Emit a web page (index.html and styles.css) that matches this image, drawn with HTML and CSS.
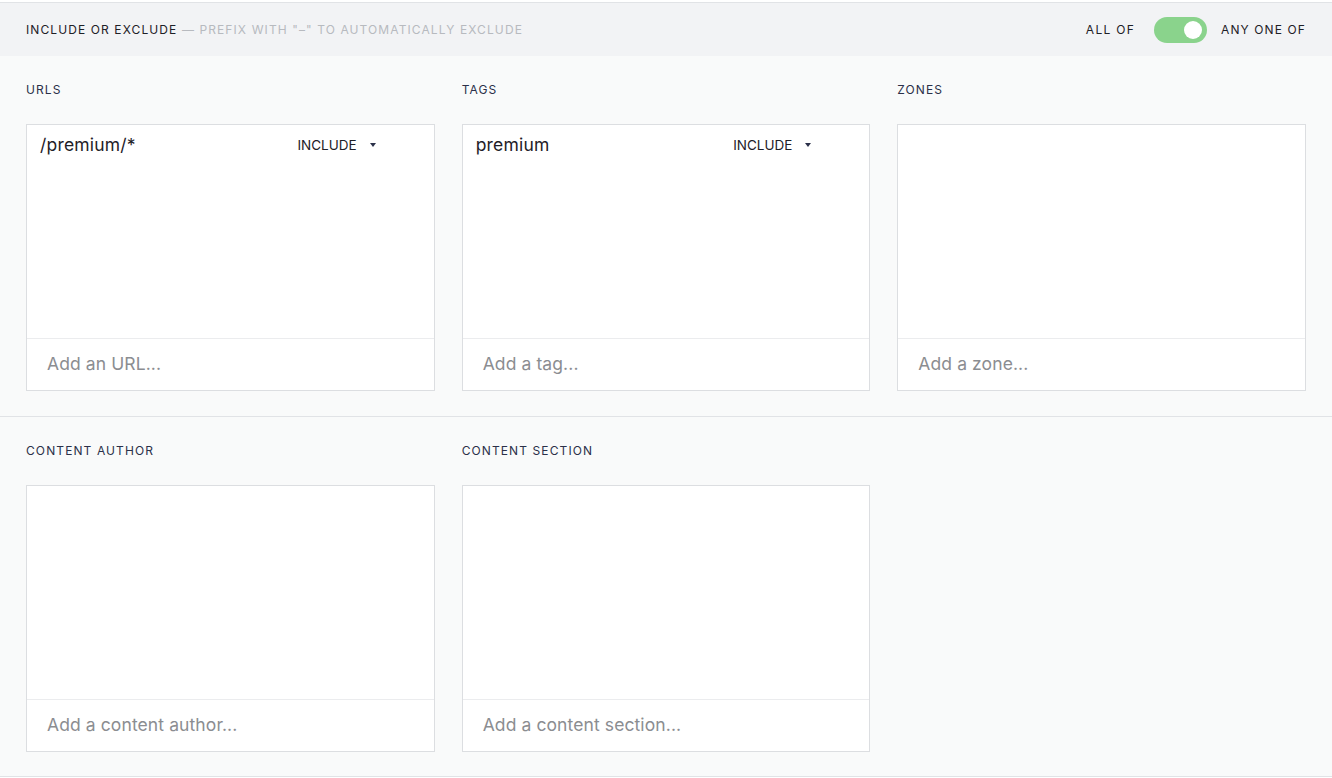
FILE: index.html
```html
<!doctype html>
<html lang="en">
<head>
    <meta charset="utf-8">
    <meta name="viewport" content="width=device-width, initial-scale=1">
    <title>Targeting rules</title>
    <link rel="stylesheet" href="styles.css">
</head>
<body>
    <div class="panel">
        <header class="panel-head">
            <p class="panel-title">Include or exclude <span class="hint">&mdash; Prefix with "&ndash;" to automatically exclude</span></p>
            <div class="mode">
                <span class="mode-off">All of</span>
                <span class="switch is-on"><span class="knob"></span></span>
                <span>Any one of</span>
            </div>
        </header>

        <section class="group">
            <div class="field">
                <h2 class="field-label">URLs</h2>
                <div class="box">
                    <ul class="items">
                        <li class="item">
                            <span class="item-name">/premium/*</span>
                            <span class="item-mode">Include <span class="caret"></span></span>
                        </li>
                    </ul>
                    <div class="adder">Add an URL...</div>
                </div>
            </div>
            <div class="field">
                <h2 class="field-label">Tags</h2>
                <div class="box">
                    <ul class="items">
                        <li class="item">
                            <span class="item-name">premium</span>
                            <span class="item-mode">Include <span class="caret"></span></span>
                        </li>
                    </ul>
                    <div class="adder">Add a tag...</div>
                </div>
            </div>
            <div class="field">
                <h2 class="field-label">Zones</h2>
                <div class="box">
                    <ul class="items"></ul>
                    <div class="adder">Add a zone...</div>
                </div>
            </div>
        </section>

        <section class="group">
            <div class="field">
                <h2 class="field-label">Content author</h2>
                <div class="box">
                    <ul class="items"></ul>
                    <div class="adder">Add a content author...</div>
                </div>
            </div>
            <div class="field">
                <h2 class="field-label">Content section</h2>
                <div class="box">
                    <ul class="items"></ul>
                    <div class="adder">Add a content section...</div>
                </div>
            </div>
        </section>
    </div>
</body>
</html>
```

FILE: styles.css
```css
/*
 * Reset
 */

*,
*::before,
*::after {
    box-sizing: border-box;
    margin: 0;
    padding: 0;
}

body {
    background-color: #fff;
    font-family: Inter, "Liberation Sans", sans-serif;
    padding-top: 2px;
}

.panel {
    background-color: #f9fafa;
    border-top: 1px solid #e1e3e6;
    border-bottom: 1px solid #e1e3e6;
}

.panel-head {
    align-items: center;
    background-color: #f2f3f5;
    display: flex;
    height: 53px;
    justify-content: space-between;
    padding: 0 26px;
}

.panel-title,
.mode {
    color: #1e2027;
    font-size: 12px;
    letter-spacing: 1.1px;
    text-transform: uppercase;
}

.hint {
    color: #b7babf;
}

.mode {
    align-items: center;
    display: flex;
    gap: 14px;
}

.mode-off {
    letter-spacing: 1.3px;
    margin-right: 5px;
}

.switch {
    background-color: #8ad38c;
    border-radius: 13px;
    display: block;
    height: 26px;
    position: relative;
    width: 53px;
}

.knob {
    background-color: #fff;
    border-radius: 50%;
    height: 18px;
    position: absolute;
    right: 5px;
    top: 4px;
    width: 18px;
}

.group {
    display: grid;
    gap: 27px;
    grid-template-columns: repeat(3, 1fr);
    padding: 27px 26px 25px;
}

.group + .group {
    border-top: 1px solid #e1e3e6;
    padding-bottom: 24px;
}

.field-label {
    color: #2b3049;
    font-size: 12px;
    font-weight: 400;
    letter-spacing: 1.1px;
    line-height: 14px;
    margin-bottom: 27px;
    text-transform: uppercase;
}

.box {
    background-color: #fff;
    border: 1px solid #dcdee1;
    display: flex;
    flex-direction: column;
    height: 267px;
}

.items {
    border-bottom: 1px solid #ebecee;
    flex: 1;
    list-style: none;
}

.item {
    align-items: center;
    display: flex;
    justify-content: space-between;
    padding: 9px 58px 0 13px;
}

.item-name {
    color: #1e2027;
    font-size: 17.5px;
    letter-spacing: 0.2px;
}

.item-mode {
    align-items: center;
    color: #1e2027;
    display: flex;
    font-size: 13.5px;
    gap: 13px;
    text-transform: uppercase;
}

.caret {
    border-left: 3.5px solid transparent;
    border-right: 3.5px solid transparent;
    border-top: 4px solid #2b3049;
    display: block;
    height: 0;
    width: 0;
}

.adder {
    color: #8b8d91;
    font-size: 17.5px;
    height: 51px;
    letter-spacing: 0.1px;
    line-height: 50px;
    padding: 0 20px;
}
```
